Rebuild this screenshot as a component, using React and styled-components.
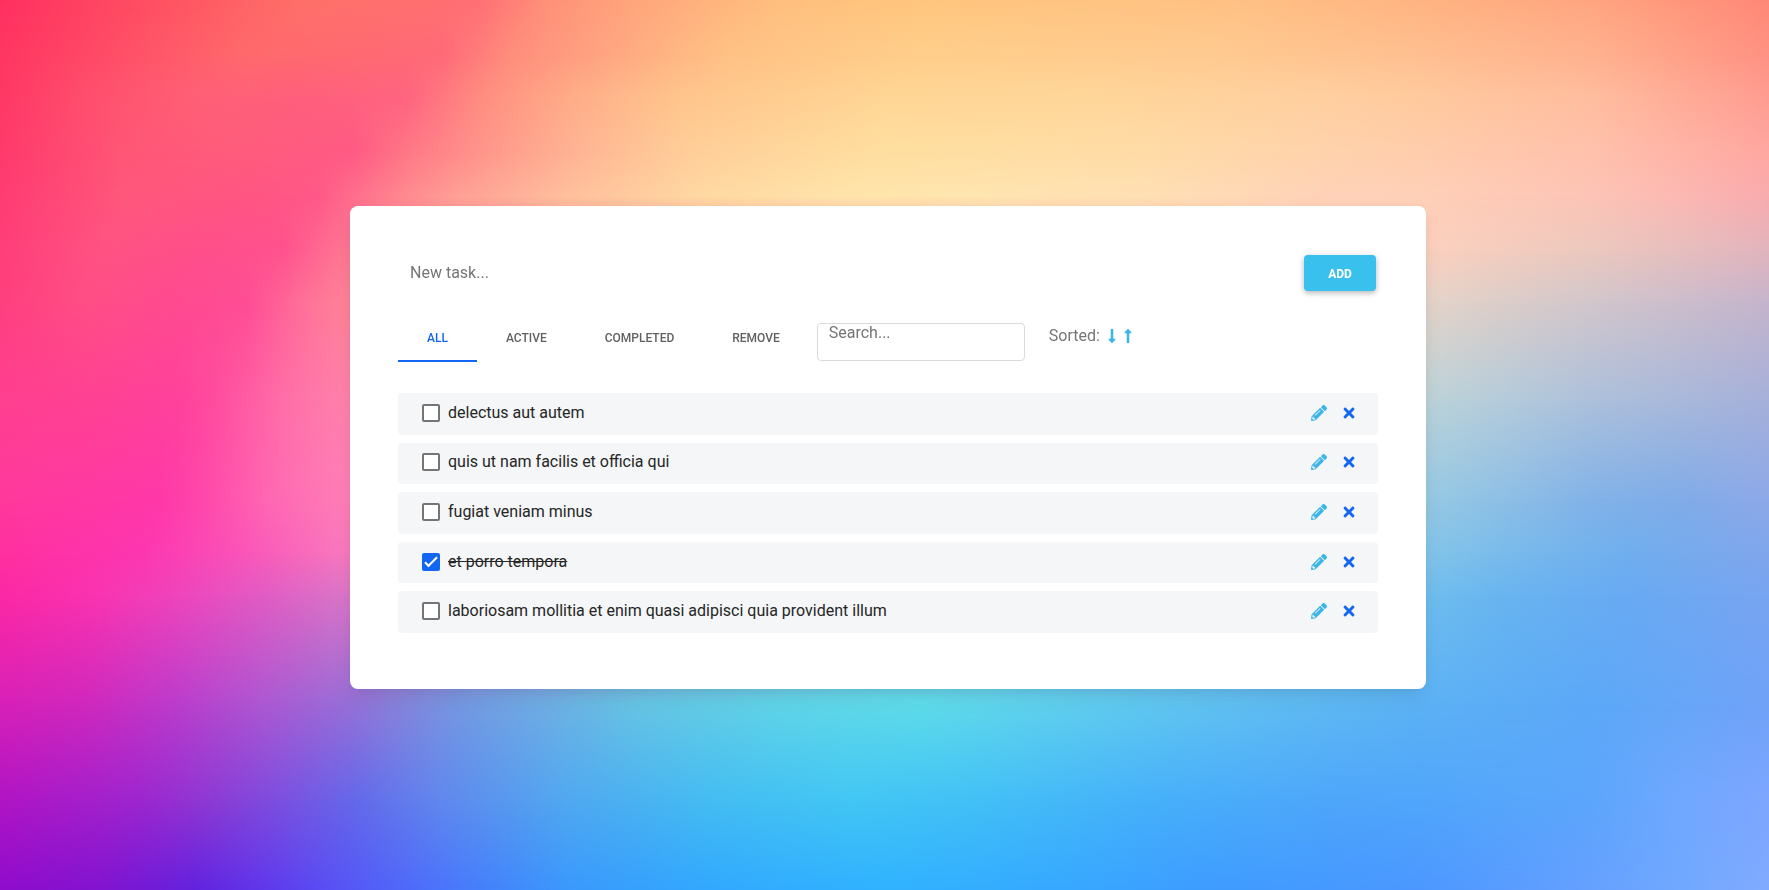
import React, { useState } from "react";
import styled, { createGlobalStyle, css } from "styled-components";
import {
  FaLongArrowAltDown,
  FaLongArrowAltUp,
  FaPencilAlt,
  FaTimes,
} from "react-icons/fa";

const GlobalStyle = createGlobalStyle`
  *, *::before, *::after { box-sizing: border-box; }
  body {
    margin: 0;
    font-family: Roboto, "Liberation Sans", sans-serif;
    font-size: 16px;
    line-height: 24px;
    color: #262626;
  }
  button, input { font: inherit; color: inherit; }
`;

/* The backdrop is a colour mesh: each band is a horizontal gradient that fades
   in over the band before it. "at" is the height (%) where a band is full. */
const bands = [
  { at: 0, stops: "#ff3060 0%, #ff5562 10%, #ff7069 17%, #ff7070 24%, #ff6f75 27%, #ff9179 31%, #ffa67c 36%, #ffbf7e 44%, #ffc67e 52%, #ffc184 70%, #ffb482 80%, #ffa580 90%, #ff8877 100%" },
  { at: 6, stops: "#ff3562 0%, #ff5068 7%, #ff6a6c 14%, #ff6a72 21%, #ff6a78 25%, #ff8e7c 29%, #ffa882 35%, #ffc185 41%, #ffce8a 52%, #ffca90 68%, #ffbf90 80%, #ffb18e 90%, #ff9182 100%" },
  { at: 11, stops: "#ff3865 0%, #ff4f6e 5%, #ff6076 11%, #ff5f7c 17%, #ff6480 23%, #ff8c80 27%, #ffab88 32%, #ffc48c 38%, #ffd695 50%, #ffd69a 62%, #ffcfa0 75%, #ffca9e 80%, #ffbd9f 90%, #ff9c91 100%" },
  { at: 17, stops: "#ff3a6c 0%, #ff5676 7%, #ff5c7c 13%, #ff5a84 20%, #ff7786 23%, #ff9a8c 28%, #ffb694 33%, #ffce99 39%, #ffdfa0 50%, #ffdca6 64%, #ffd2ac 75%, #ffcdac 80%, #ffc1ac 90%, #ffa7a1 100%" },
  { at: 22, stops: "#ff3c73 0%, #ff577c 7%, #ff5583 14%, #ff5888 18%, #ff6e8c 20%, #ff8a90 23%, #ffa096 26%, #ffbf9c 32%, #ffd9a2 40%, #ffe4aa 48%, #ffe5b0 55%, #ffdfb4 65%, #ffd2b8 75%, #ffd0b8 80%, #fdc4b6 90%, #fcb8b3 95%, #f9abae 100%" },
  { at: 28, stops: "#ff3e79 0%, #ff5383 6%, #ff4f8a 11%, #ff528e 16%, #ff7292 19%, #ff8a96 22%, #ffd0b8 78%, #fbd0be 81%, #ecc8be 90%, #e2b4bd 100%" },
  { at: 34, stops: "#ff3f7f 0%, #ff4e86 5%, #ff4a90 10%, #ff4d95 14%, #ff6f98 17%, #ff8698 20%, #e6d5ca 80%, #dbcdc9 85%, #d2c6cc 90%, #c5b4cc 100%" },
  { at: 45, stops: "#ff3f90 0%, #ff4193 5%, #ff419c 10%, #ff4b9f 12%, #ff6ea8 16%, #ff83ac 20%, #bdd4d8 80%, #b4cbdb 85%, #acc0db 90%, #a5b0da 100%" },
  { at: 56, stops: "#ff399c 0%, #ff38a8 9%, #ff44aa 11%, #ff66b2 15%, #ff80b8 20%, #98cbe3 80%, #8ebfe5 85%, #82b2e8 90%, #80ace8 95%, #8ea8e8 100%" },
  { at: 62, stops: "#ff309f 0%, #fd36b0 8%, #fb50b8 13%, #f87cbe 20%, #84c6e8 80%, #78b9ec 86%, #70aeee 92%, #80a6ec 100%" },
  { at: 67, stops: "#fc28a4 0%, #fa32b0 5%, #ee44bc 10%, #e05cc4 15%, #d878c8 20%, #70bfee 80%, #68b4f0 85%, #68aaf3 92%, #78a4f1 100%" },
  { at: 79, stops: "#d820b8 0%, #cf28bd 5%, #bb3ccc 10%, #ac58d2 15%, #9570d8 20%, #8486dc 23%, #7498e2 26%, #6eaee4 31%, #66c4e4 36%, #60d4e8 44%, #5edcea 52%, #60cfee 60%, #60bff2 70%, #5cb2f4 80%, #5ca8f8 90%, #66a6f8 95%, #70a2f8 100%" },
  { at: 90, stops: "#b014c4 0%, #9c26cf 8%, #8c3ad4 12%, #7a50e0 16%, #6468ea 20%, #6088ee 25%, #50a8f0 32%, #44bcf2 40%, #42c6f4 48%, #42c0f6 55%, #46b0fa 65%, #4ea6fa 75%, #50a6fb 80%, #5ca6fc 90%, #70a8ff 95%, #7ea6ff 100%" },
  { at: 100, stops: "#8f0ccc 0%, #8014d0 6%, #6222de 11%, #5f38ec 15%, #5558f6 20%, #4a74fb 25%, #3a98fc 32%, #32a8fe 40%, #30b2ff 50%, #36a8ff 60%, #3e9cff 68%, #4b97ff 80%, #66a0ff 90%, #70a8ff 95%, #80aaff 100%" },
];

const Backdrop = styled.div`
  position: fixed;
  inset: 0;
  z-index: -1;
  display: grid;
`;

const Band = styled.div`
  grid-area: 1 / 1;
  background: linear-gradient(to right, ${(p) => p.$stops});
  ${(p) =>
    p.$at > 0 &&
    css`
      mask-image: linear-gradient(
        to bottom,
        transparent ${p.$from}%,
        black ${p.$at}%
      );
    `}
`;

const Page = styled.main`
  min-height: 100vh;
  display: flex;
  align-items: center;
  justify-content: center;
  padding: 5px 0 0 7px;
`;

const Card = styled.section`
  width: 100%;
  max-width: 1076px;
  padding: 48px 48px 56px;
  background: #fff;
  border-radius: 8px;
  box-shadow: 0 2px 15px -3px rgba(0, 0, 0, 0.07),
    0 10px 20px -2px rgba(0, 0, 0, 0.08);
`;

const TaskForm = styled.form`
  display: flex;
  align-items: center;
  padding: 1px 2px 1px 0;
  margin-bottom: 23px;
`;

const TaskInput = styled.input`
  flex: 1;
  min-width: 0;
  height: 36px;
  padding: 0 12px 2px;
  border: 0;
  outline: 0;
  background: transparent;
  &::placeholder { color: #757575; opacity: 1; }
`;

const AddButton = styled.button`
  width: 72px;
  height: 36px;
  padding: 2px 0 0;
  border: 0;
  border-radius: 4px;
  background: #39c0ed;
  color: #fff;
  font-size: 12px;
  font-weight: 700;
  text-transform: uppercase;
  cursor: pointer;
  box-shadow: 0 2px 5px rgba(0, 0, 0, 0.2), 0 2px 10px rgba(0, 0, 0, 0.1);
`;

const Toolbar = styled.div`
  display: flex;
  flex-wrap: wrap;
  column-gap: 8px;
  margin-bottom: 31px;
`;

const Tabs = styled.div`
  display: flex;
`;

const Tab = styled.button`
  padding: 17px 29px 16px;
  border: 0;
  border-bottom: 2px solid ${(p) => (p.$active ? "#1266f1" : "transparent")};
  background: transparent;
  color: ${(p) => (p.$active ? "#1266f1" : "#616161")};
  font-size: 12px;
  font-weight: 500;
  line-height: 12px;
  text-transform: uppercase;
  cursor: pointer;
`;

const Filters = styled.div`
  display: flex;
  align-items: flex-start;
  gap: 24px;
  padding-top: 8px;
`;

const SearchInput = styled.input`
  width: 208px;
  height: 38px;
  padding: 0 11px 20px;
  border: 1px solid #dadada;
  border-radius: 4px;
  outline: 0;
  background: #fff;
  &::placeholder { color: #757575; opacity: 1; }
`;

const Sorting = styled.div`
  display: flex;
  align-items: center;
  line-height: 26px;
  color: #757575;
`;

const SortLabel = styled.span`
  margin-right: 4px;
`;

const IconButton = styled.button`
  display: flex;
  padding: 0;
  border: 0;
  background: transparent;
  color: ${(p) => (p.$tone === "primary" ? "#1266f1" : "#39b5e8")};
  font-size: 16px;
  cursor: pointer;
`;

const TaskList = styled.ul`
  display: grid;
  grid-auto-rows: 1fr;
  gap: 8px;
  min-height: 240px;
  margin: 0;
  padding: 0;
  list-style: none;
`;

const TaskRow = styled.li`
  display: flex;
  align-items: center;
  justify-content: space-between;
  padding: 0 21px 2px 24px;
  border-radius: 4px;
  background: #f4f6f7;
`;

const TaskLabel = styled.label`
  display: flex;
  align-items: center;
  gap: 8px;
  text-decoration: ${(p) => (p.$done ? "line-through" : "none")};
`;

const Checkbox = styled.input`
  appearance: none;
  flex: none;
  width: 18px;
  height: 18px;
  margin: 0;
  border: 2px solid #757575;
  border-radius: 2px;
  background: #fff;
  cursor: pointer;
  &:checked {
    border-color: #1266f1;
    background: #1266f1;
  }
  &:checked::after {
    content: "";
    display: block;
    width: 6px;
    height: 13px;
    margin: -1px 0 0 4px;
    border: solid #fff;
    border-width: 0 2px 2px 0;
    transform: rotate(45deg);
  }
`;

const RowActions = styled.div`
  display: flex;
  gap: 14px;
`;

const initialTasks = [
  { id: 1, title: "delectus aut autem", done: false },
  { id: 2, title: "quis ut nam facilis et officia qui", done: false },
  { id: 3, title: "fugiat veniam minus", done: false },
  { id: 4, title: "et porro tempora", done: true },
  { id: 5, title: "laboriosam mollitia et enim quasi adipisci quia provident illum", done: false },
];

const tabNames = ["All", "Active", "Completed", "Remove"];

export default function App() {
  const [tasks, setTasks] = useState(initialTasks);
  const [tab, setTab] = useState("All");
  const [draft, setDraft] = useState("");
  const [query, setQuery] = useState("");

  const addTask = (event) => {
    event.preventDefault();
    if (!draft.trim()) return;
    setTasks([...tasks, { id: Date.now(), title: draft.trim(), done: false }]);
    setDraft("");
  };
  const toggle = (id) =>
    setTasks(tasks.map((t) => (t.id === id ? { ...t, done: !t.done } : t)));
  const sort = (dir) =>
    setTasks([...tasks].sort((a, b) => dir * a.title.localeCompare(b.title)));

  const visible = tasks.filter(
    (t) =>
      t.title.includes(query) &&
      (tab === "Active" ? !t.done : tab === "Completed" ? t.done : true)
  );

  return (
    <>
      <GlobalStyle />
      <Backdrop aria-hidden="true">
        {bands.map((band, i) => (
          <Band
            key={band.at}
            $stops={band.stops}
            $at={band.at}
            $from={i ? bands[i - 1].at : 0}
          />
        ))}
      </Backdrop>
      <Page>
        <Card>
          <TaskForm onSubmit={addTask}>
            <TaskInput
              type="text"
              aria-label="New task"
              placeholder="New task..."
              value={draft}
              onChange={(e) => setDraft(e.target.value)}
            />
            <AddButton type="submit">Add</AddButton>
          </TaskForm>
          <Toolbar>
            <Tabs role="tablist">
              {tabNames.map((name) => (
                <Tab
                  key={name}
                  type="button"
                  role="tab"
                  aria-selected={tab === name}
                  $active={tab === name}
                  onClick={() => setTab(name)}
                >
                  {name}
                </Tab>
              ))}
            </Tabs>
            <Filters>
              <SearchInput
                type="text"
                aria-label="Search"
                placeholder="Search..."
                value={query}
                onChange={(e) => setQuery(e.target.value)}
              />
              <Sorting>
                <SortLabel>Sorted:</SortLabel>
                <IconButton type="button" aria-label="Sort descending" onClick={() => sort(-1)}>
                  <FaLongArrowAltDown />
                </IconButton>
                <IconButton type="button" aria-label="Sort ascending" onClick={() => sort(1)}>
                  <FaLongArrowAltUp />
                </IconButton>
              </Sorting>
            </Filters>
          </Toolbar>
          <TaskList>
            {visible.map((task) => (
              <TaskRow key={task.id}>
                <TaskLabel htmlFor={`task-${task.id}`} $done={task.done}>
                  <Checkbox
                    type="checkbox"
                    id={`task-${task.id}`}
                    checked={task.done}
                    onChange={() => toggle(task.id)}
                  />
                  {task.title}
                </TaskLabel>
                <RowActions>
                  <IconButton type="button" aria-label="Edit task">
                    <FaPencilAlt />
                  </IconButton>
                  <IconButton
                    type="button"
                    aria-label="Delete task"
                    $tone="primary"
                    onClick={() => setTasks(tasks.filter((t) => t.id !== task.id))}
                  >
                    <FaTimes />
                  </IconButton>
                </RowActions>
              </TaskRow>
            ))}
          </TaskList>
        </Card>
      </Page>
    </>
  );
}
